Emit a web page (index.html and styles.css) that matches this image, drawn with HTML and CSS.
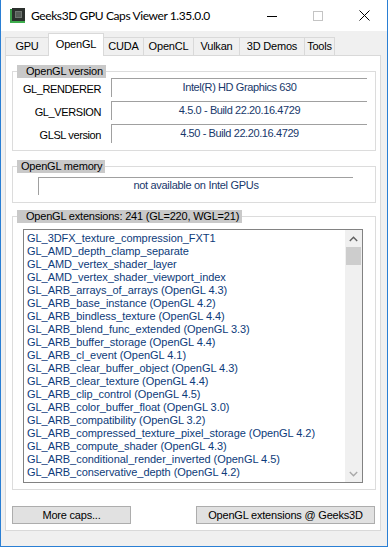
FILE: index.html
```html
<!DOCTYPE html>
<html>
<head>
<meta charset="utf-8">
<link rel="stylesheet" href="styles.css">
</head>
<body>
<div class="window">
  <div class="titlebar">
    <svg class="app-icon" viewBox="0 0 15 15" width="15" height="15">
      <rect x="0" y="1" width="14" height="14" fill="#2f8a3c"/>
      <rect x="2" y="0" width="13" height="13" fill="#2b302d"/>
      <rect x="5" y="3" width="7" height="7" fill="#6e7570"/>
      <rect x="6" y="4" width="5" height="5" fill="#565c58"/>
      <rect x="0" y="13" width="15" height="2" fill="#3fae4e"/>
      <rect x="0" y="2" width="2" height="12" fill="#3a9e48"/>
    </svg>
    <span class="title">Geeks3D GPU Caps Viewer 1.35.0.0</span>
    <div class="controls">
      <div class="ctl">
        <svg width="10" height="10" viewBox="0 0 10 10"><line x1="0" y1="5.5" x2="10" y2="5.5" stroke="#000" stroke-width="1"/></svg>
      </div>
      <div class="ctl">
        <svg width="10" height="10" viewBox="0 0 10 10"><rect x="0.5" y="0.5" width="9" height="9" fill="none" stroke="#c4c4c4" stroke-width="1"/></svg>
      </div>
      <div class="ctl">
        <svg width="11" height="11" viewBox="0 0 11 11"><path d="M0.5 0.5 L10.5 10.5 M10.5 0.5 L0.5 10.5" stroke="#000" stroke-width="1" fill="none"/></svg>
      </div>
    </div>
  </div>

  <div class="tabs">
    <div class="tab t-gpu">GPU</div>
    <div class="tab t-opengl active">OpenGL</div>
    <div class="tab t-cuda">CUDA</div>
    <div class="tab t-opencl">OpenCL</div>
    <div class="tab t-vulkan">Vulkan</div>
    <div class="tab t-demos">3D Demos</div>
    <div class="tab t-tools">Tools</div>
  </div>

  <div class="panel">
    <fieldset class="group g-version">
      <legend class="pad">OpenGL version</legend>
      <div class="rows">
        <div class="row"><div class="lbl">GL_RENDERER</div><div class="val">Intel(R) HD Graphics 630</div></div>
        <div class="row"><div class="lbl">GL_VERSION</div><div class="val">4.5.0 - Build 22.20.16.4729</div></div>
        <div class="row"><div class="lbl">GLSL version</div><div class="val">4.50 - Build 22.20.16.4729</div></div>
      </div>
    </fieldset>

    <fieldset class="group g-mem">
      <legend>OpenGL memory</legend>
      <div class="membox">not available on Intel GPUs</div>
    </fieldset>

    <fieldset class="group g-ext">
      <legend class="pad">OpenGL extensions: 241 (GL=220, WGL=21)</legend>
      <div class="listbox">
        <div class="items">
          <div>GL_3DFX_texture_compression_FXT1</div>
          <div>GL_AMD_depth_clamp_separate</div>
          <div>GL_AMD_vertex_shader_layer</div>
          <div>GL_AMD_vertex_shader_viewport_index</div>
          <div>GL_ARB_arrays_of_arrays (OpenGL 4.3)</div>
          <div>GL_ARB_base_instance (OpenGL 4.2)</div>
          <div>GL_ARB_bindless_texture (OpenGL 4.4)</div>
          <div>GL_ARB_blend_func_extended (OpenGL 3.3)</div>
          <div>GL_ARB_buffer_storage (OpenGL 4.4)</div>
          <div>GL_ARB_cl_event (OpenGL 4.1)</div>
          <div>GL_ARB_clear_buffer_object (OpenGL 4.3)</div>
          <div>GL_ARB_clear_texture (OpenGL 4.4)</div>
          <div>GL_ARB_clip_control (OpenGL 4.5)</div>
          <div>GL_ARB_color_buffer_float (OpenGL 3.0)</div>
          <div>GL_ARB_compatibility (OpenGL 3.2)</div>
          <div>GL_ARB_compressed_texture_pixel_storage (OpenGL 4.2)</div>
          <div>GL_ARB_compute_shader (OpenGL 4.3)</div>
          <div>GL_ARB_conditional_render_inverted (OpenGL 4.5)</div>
          <div>GL_ARB_conservative_depth (OpenGL 4.2)</div>
        </div>
        <div class="scrollbar">
          <div class="sb-btn">
            <svg width="9" height="6" viewBox="0 0 9 6"><path d="M0.8 5 L4.5 1.3 L8.2 5" fill="none" stroke="#606060" stroke-width="1.4"/></svg>
          </div>
          <div class="sb-thumb"></div>
          <div class="sb-track"></div>
          <div class="sb-btn">
            <svg width="9" height="6" viewBox="0 0 9 6"><path d="M0.8 1 L4.5 4.7 L8.2 1" fill="none" stroke="#a8a8a8" stroke-width="1.4"/></svg>
          </div>
        </div>
      </div>
    </fieldset>

    <div class="buttons">
      <div class="btn b-more">More caps...</div>
      <div class="btn b-ext">OpenGL extensions @ Geeks3D</div>
    </div>
  </div>
</div>
</body>
</html>
```

FILE: styles.css
```css
* { box-sizing: border-box; }
html, body { margin: 0; padding: 0; }
body {
  width: 388px;
  height: 547px;
  overflow: hidden;
  background: #f0f0f0;
  font-family: "Liberation Sans", Arial, sans-serif;
  font-size: 11px;
  color: #000;
}
.window {
  width: 388px;
  height: 547px;
  border: 1px solid #2a7fd4;
  border-top: none;
  background: #f0f0f0;
  display: flex;
  flex-direction: column;
}
.titlebar {
  height: 31px;
  flex: none;
  background: #fff;
  display: flex;
  align-items: center;
}
.app-icon { margin-left: 9px; flex: none; }
.title {
  margin-left: 6px;
  font-family: Lato, "Noto Sans", sans-serif;
  font-size: 12px;
  letter-spacing: -0.4px;
  color: #000;
}
.controls { margin-left: auto; display: flex; height: 31px; }
.ctl {
  width: 46px;
  height: 31px;
  display: flex;
  align-items: center;
  justify-content: center;
}

.tabs {
  flex: none;
  display: flex;
  align-items: flex-end;
  height: 23px;
  margin-top: 2px;
  padding-left: 4px;
}
.tab {
  height: 18px;
  margin-bottom: 1px;
  margin-left: -1px;
  border: 1px solid #d9d9d9;
  border-bottom: none;
  background: #f0f0f0;
  text-align: center;
  line-height: 17px;
  letter-spacing: -0.2px;
  white-space: nowrap;
}
.tab:first-child { margin-left: 0; }
.tab.active {
  height: 23px;
  margin-bottom: 0;
  background: #fff;
  position: relative;
  z-index: 1;
  line-height: 20px;
}
.t-gpu { width: 44px; }
.t-opengl { width: 56px; }
.t-cuda { width: 41px; }
.t-opencl { width: 51px; }
.t-vulkan { width: 47px; }
.t-demos { width: 66px; }
.t-tools { width: 31px; }

.panel {
  flex: none;
  height: 476px;
  margin: -1px 6px 0 4px;
  border: 1px solid #d9d9d9;
  background: #fff;
  padding: 9px 4px 0 6px;
}

.group {
  margin: 0;
  padding: 0;
  min-width: 0;
  border: 1px solid #dcdcdc;
}
.group legend {
  margin-left: 4px;
  padding: 0 3px 0 4px;
  background: #c9c9c9;
  line-height: 13px;
  letter-spacing: -0.2px;
  white-space: nowrap;
}
.group legend.pad { padding-left: 9px; }
.g-mem { margin-top: 9px; }
.g-ext { margin-top: 7px; }

.rows {
  display: flex;
  flex-direction: column;
  gap: 4px;
  padding: 0 8px 7px 0;
}
.row { display: flex; align-items: center; height: 19px; }
.lbl {
  width: 88px;
  text-align: right;
  letter-spacing: -0.4px;
  white-space: nowrap;
  padding-top: 2px;
}
.val {
  margin-left: 10px;
  width: 256px;
  height: 19px;
  border-top: 1px solid #a0a0a0;
  border-left: 1px solid #a0a0a0;
  text-align: center;
  line-height: 16px;
  color: #17386b;
  letter-spacing: -0.4px;
  white-space: nowrap;
}
.membox {
  margin: 4px 0 7px 25px;
  width: 315px;
  height: 18px;
  border-top: 1px solid #a0a0a0;
  border-left: 1px solid #a0a0a0;
  text-align: center;
  line-height: 15px;
  color: #17386b;
  letter-spacing: -0.3px;
}

.listbox {
  margin: 6px 0 6px 10px;
  width: 340px;
  height: 254px;
  border: 1px solid #828282;
  display: flex;
  overflow: hidden;
}
.items {
  flex: 1;
  min-width: 0;
  padding: 2px 0 0 3px;
  line-height: 13px;
  color: #0d3b7a;
  letter-spacing: -0.05px;
  white-space: nowrap;
  overflow: hidden;
}
.scrollbar {
  width: 17px;
  flex: none;
  background: #f0f0f0;
  display: flex;
  flex-direction: column;
}
.sb-btn {
  height: 17px;
  flex: none;
  display: flex;
  align-items: center;
  justify-content: center;
}
.sb-thumb { height: 18px; flex: none; margin: 0 1px; background: #cdcdcd; }
.sb-track { flex: 1; }

.buttons {
  display: flex;
  justify-content: space-between;
  margin-top: 16px;
  padding-right: 1px;
}
.btn {
  height: 18px;
  border: 1px solid #adadad;
  background: #e1e1e1;
  text-align: center;
  line-height: 16px;
  letter-spacing: -0.2px;
  white-space: nowrap;
}
.b-more { width: 119px; }
.b-ext { width: 179px; }
```
